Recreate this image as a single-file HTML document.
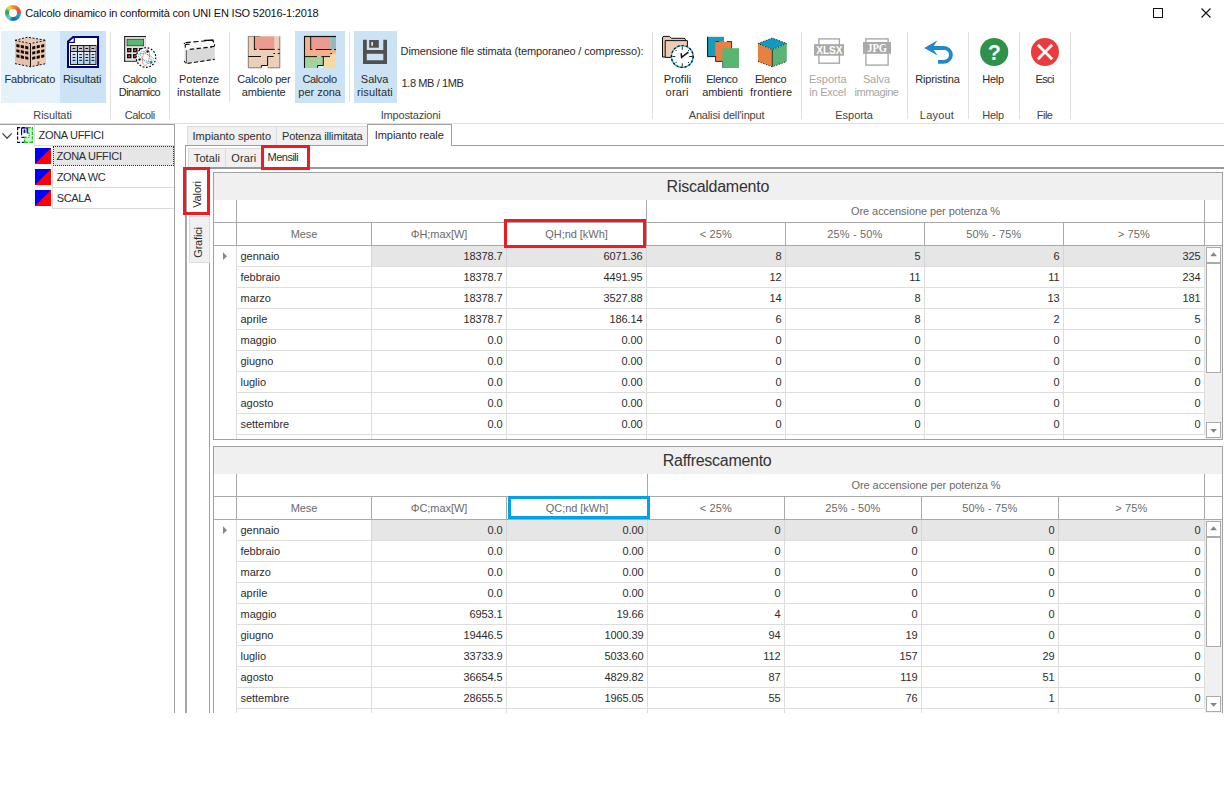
<!DOCTYPE html><html lang="it"><head><meta charset="utf-8"><title>Calcolo dinamico in conformità con UNI EN ISO 52016-1:2018</title>
<style>html,body{margin:0;padding:0;background:#fff;}body{width:1224px;height:793px;position:relative;overflow:hidden;font-family:"Liberation Sans", sans-serif;}div,svg{position:absolute;box-sizing:border-box;}.t{overflow:visible;}</style></head><body>
<div style="left:5px;top:5px;width:16.2px;height:16.2px;border-radius:50%;background:conic-gradient(from 0deg,#f6912b 0deg,#f26a33 35deg,#ee473d 70deg,#ee473d 92deg,#27a9cc 100deg,#1d8fc0 135deg,#1b67a6 175deg,#2a86b8 195deg,#63c8db 215deg,#5cc0c0 240deg,#36a456 262deg,#3aa757 290deg,#c9cf3a 308deg,#f8d230 322deg,#f7b02d 345deg,#f6912b 360deg);"></div>
<div style="left:9.2px;top:9.1px;width:7.8px;height:7.8px;border-radius:50%;background:#fff;"></div>
<div class="t" style="left:25.30px;top:5.69px;width:400px;height:15px;line-height:15px;font-size:11px;color:#111;text-align:left;letter-spacing:-0.184px;white-space:nowrap;">Calcolo dinamico in conformità con UNI EN ISO 52016-1:2018</div>
<svg style="left:1152px;top:7px" width="12" height="12"><rect x="1.5" y="1.5" width="9" height="9" fill="none" stroke="#111" stroke-width="1"/></svg>
<svg style="left:1200px;top:7px" width="12" height="12"><path d="M1.5 1.5 L10.5 10.5 M10.5 1.5 L1.5 10.5" fill="none" stroke="#111" stroke-width="1.1"/></svg>
<div style="left:1px;top:31px;width:59px;height:72px;background:#e5f1fb;"></div>
<div style="left:60px;top:31px;width:46px;height:72px;background:#cce3f6;"></div>
<div style="left:295px;top:31px;width:50px;height:72px;background:#cce3f6;"></div>
<div style="left:354px;top:31px;width:43px;height:72px;background:#cce3f6;"></div>
<div style="left:110px;top:32px;width:1px;height:87px;background:#e1e1e1;"></div>
<div style="left:169px;top:32px;width:1px;height:87px;background:#e1e1e1;"></div>
<div style="left:652px;top:32px;width:1px;height:87px;background:#e1e1e1;"></div>
<div style="left:801px;top:32px;width:1px;height:87px;background:#e1e1e1;"></div>
<div style="left:907px;top:32px;width:1px;height:87px;background:#e1e1e1;"></div>
<div style="left:968px;top:32px;width:1px;height:87px;background:#e1e1e1;"></div>
<div style="left:1019px;top:32px;width:1px;height:87px;background:#e1e1e1;"></div>
<div style="left:1070px;top:32px;width:1px;height:87px;background:#e1e1e1;"></div>
<div style="left:229px;top:32px;width:1px;height:70px;background:#e1e1e1;"></div>
<div style="left:349px;top:32px;width:1px;height:70px;background:#e1e1e1;"></div>
<div style="left:0px;top:123px;width:1224px;height:1px;background:#e0e0e0;"></div>
<div class="t" style="left:-120.24px;top:71.69px;width:300px;height:15px;line-height:15px;font-size:11px;color:#2a2a2a;text-align:center;letter-spacing:-0.119px;white-space:nowrap;">Fabbricato</div>
<div class="t" style="left:-67.82px;top:71.69px;width:300px;height:15px;line-height:15px;font-size:11px;color:#2a2a2a;text-align:center;letter-spacing:-0.065px;white-space:nowrap;">Risultati</div>
<div class="t" style="left:-10.64px;top:71.69px;width:300px;height:15px;line-height:15px;font-size:11px;color:#2a2a2a;text-align:center;letter-spacing:-0.414px;white-space:nowrap;">Calcolo</div>
<div class="t" style="left:-10.52px;top:84.69px;width:300px;height:15px;line-height:15px;font-size:11px;color:#2a2a2a;text-align:center;letter-spacing:-0.564px;white-space:nowrap;">Dinamico</div>
<div class="t" style="left:49.14px;top:71.69px;width:300px;height:15px;line-height:15px;font-size:11px;color:#2a2a2a;text-align:center;letter-spacing:-0.036px;white-space:nowrap;">Potenze</div>
<div class="t" style="left:48.97px;top:84.69px;width:300px;height:15px;line-height:15px;font-size:11px;color:#2a2a2a;text-align:center;letter-spacing:0.054px;white-space:nowrap;">installate</div>
<div class="t" style="left:113.86px;top:71.69px;width:300px;height:15px;line-height:15px;font-size:11px;color:#2a2a2a;text-align:center;letter-spacing:-0.224px;white-space:nowrap;">Calcolo per</div>
<div class="t" style="left:113.60px;top:84.69px;width:300px;height:15px;line-height:15px;font-size:11px;color:#2a2a2a;text-align:center;letter-spacing:-0.193px;white-space:nowrap;">ambiente</div>
<div class="t" style="left:169.54px;top:71.69px;width:300px;height:15px;line-height:15px;font-size:11px;color:#2a2a2a;text-align:center;letter-spacing:-0.339px;white-space:nowrap;">Calcolo</div>
<div class="t" style="left:169.64px;top:84.69px;width:300px;height:15px;line-height:15px;font-size:11px;color:#2a2a2a;text-align:center;letter-spacing:-0.022px;white-space:nowrap;">per zona</div>
<div class="t" style="left:224.61px;top:71.69px;width:300px;height:15px;line-height:15px;font-size:11px;color:#2a2a2a;text-align:center;letter-spacing:0.034px;white-space:nowrap;">Salva</div>
<div class="t" style="left:224.93px;top:84.69px;width:300px;height:15px;line-height:15px;font-size:11px;color:#2a2a2a;text-align:center;letter-spacing:0.132px;white-space:nowrap;">risultati</div>
<div class="t" style="left:527.51px;top:71.69px;width:300px;height:15px;line-height:15px;font-size:11px;color:#2a2a2a;text-align:center;letter-spacing:-0.018px;white-space:nowrap;">Profili</div>
<div class="t" style="left:527.14px;top:84.69px;width:300px;height:15px;line-height:15px;font-size:11px;color:#2a2a2a;text-align:center;letter-spacing:0.224px;white-space:nowrap;">orari</div>
<div class="t" style="left:571.82px;top:71.69px;width:300px;height:15px;line-height:15px;font-size:11px;color:#2a2a2a;text-align:center;letter-spacing:-0.397px;white-space:nowrap;">Elenco</div>
<div class="t" style="left:572.55px;top:84.69px;width:300px;height:15px;line-height:15px;font-size:11px;color:#2a2a2a;text-align:center;letter-spacing:-0.097px;white-space:nowrap;">ambienti</div>
<div class="t" style="left:620.57px;top:71.69px;width:300px;height:15px;line-height:15px;font-size:11px;color:#2a2a2a;text-align:center;letter-spacing:-0.397px;white-space:nowrap;">Elenco</div>
<div class="t" style="left:621.26px;top:84.69px;width:300px;height:15px;line-height:15px;font-size:11px;color:#2a2a2a;text-align:center;letter-spacing:0.225px;white-space:nowrap;">frontiere</div>
<div class="t" style="left:677.90px;top:71.69px;width:300px;height:15px;line-height:15px;font-size:11px;color:#a6a6a6;text-align:center;letter-spacing:-0.043px;white-space:nowrap;">Esporta</div>
<div class="t" style="left:677.62px;top:84.69px;width:300px;height:15px;line-height:15px;font-size:11px;color:#a6a6a6;text-align:center;letter-spacing:-0.231px;white-space:nowrap;">in Excel</div>
<div class="t" style="left:726.42px;top:71.69px;width:300px;height:15px;line-height:15px;font-size:11px;color:#a6a6a6;text-align:center;letter-spacing:-0.091px;white-space:nowrap;">Salva</div>
<div class="t" style="left:726.48px;top:84.69px;width:300px;height:15px;line-height:15px;font-size:11px;color:#a6a6a6;text-align:center;letter-spacing:-0.469px;white-space:nowrap;">immagine</div>
<div class="t" style="left:787.42px;top:71.69px;width:300px;height:15px;line-height:15px;font-size:11px;color:#2a2a2a;text-align:center;letter-spacing:-0.138px;white-space:nowrap;">Ripristina</div>
<div class="t" style="left:843.05px;top:71.69px;width:300px;height:15px;line-height:15px;font-size:11px;color:#2a2a2a;text-align:center;letter-spacing:-0.307px;white-space:nowrap;">Help</div>
<div class="t" style="left:894.61px;top:71.69px;width:300px;height:15px;line-height:15px;font-size:11px;color:#2a2a2a;text-align:center;letter-spacing:-0.627px;white-space:nowrap;">Esci</div>
<div class="t" style="left:-97.46px;top:107.69px;width:300px;height:15px;line-height:15px;font-size:11px;color:#444;text-align:center;letter-spacing:-0.078px;white-space:nowrap;">Risultati</div>
<div class="t" style="left:-10.33px;top:107.69px;width:300px;height:15px;line-height:15px;font-size:11px;color:#444;text-align:center;letter-spacing:-0.435px;white-space:nowrap;">Calcoli</div>
<div class="t" style="left:260.58px;top:107.69px;width:300px;height:15px;line-height:15px;font-size:11px;color:#444;text-align:center;letter-spacing:-0.168px;white-space:nowrap;">Impostazioni</div>
<div class="t" style="left:576.58px;top:107.69px;width:300px;height:15px;line-height:15px;font-size:11px;color:#444;text-align:center;letter-spacing:-0.155px;white-space:nowrap;">Analisi dell&#x27;input</div>
<div class="t" style="left:704.15px;top:107.69px;width:300px;height:15px;line-height:15px;font-size:11px;color:#444;text-align:center;letter-spacing:-0.043px;white-space:nowrap;">Esporta</div>
<div class="t" style="left:786.99px;top:107.69px;width:300px;height:15px;line-height:15px;font-size:11px;color:#444;text-align:center;letter-spacing:0.215px;white-space:nowrap;">Layout</div>
<div class="t" style="left:843.05px;top:107.69px;width:300px;height:15px;line-height:15px;font-size:11px;color:#444;text-align:center;letter-spacing:-0.307px;white-space:nowrap;">Help</div>
<div class="t" style="left:894.60px;top:107.69px;width:300px;height:15px;line-height:15px;font-size:11px;color:#444;text-align:center;letter-spacing:-0.508px;white-space:nowrap;">File</div>
<div class="t" style="left:400.60px;top:43.69px;width:400px;height:15px;line-height:15px;font-size:11px;color:#2a2a2a;text-align:left;letter-spacing:-0.123px;white-space:nowrap;">Dimensione file stimata (temporaneo / compresso):</div>
<div class="t" style="left:401.50px;top:75.69px;width:400px;height:15px;line-height:15px;font-size:11px;color:#2a2a2a;text-align:left;letter-spacing:-0.385px;white-space:nowrap;">1.8 MB / 1MB</div>
<svg style="left:0;top:0" width="1224" height="125" viewBox="0 0 1224 125" shape-rendering="auto">
<g>
<path d="M15 40.3 L27.5 37.2 L46 40.3 L30.5 43.6 Z" fill="#ecc9b2"/>
<path d="M15 40.3 L30.5 43.6 L30.5 66.8 L15 63.6 Z" fill="#e6c0a8"/>
<path d="M30.5 43.6 L46 40.3 L46 63.6 L30.5 66.8 Z" fill="#eccbb5"/>
<path d="M15 40.3 L27.5 37.2 L46 40.3 M15 63.6 L30.5 66.8 L46 63.6 M15 40.3 L30.5 43.6 L46 40.3" fill="none" stroke="#111" stroke-width="1" stroke-dasharray="2 1.6"/>
<path d="M30.5 43.6 V66.8" stroke="#111" stroke-width="1"/>
<path d="M16.4 44.0 l3.1 0.7 v2.9 l-3.1 -0.7 Z" fill="#0a0a0a"/>
<path d="M32.2 46.5 l3.1 -0.7 v2.9 l-3.1 0.7 Z" fill="#0a0a0a"/>
<path d="M20.8 44.9 l3.1 0.7 v2.9 l-3.1 -0.7 Z" fill="#0a0a0a"/>
<path d="M36.7 45.6 l3.1 -0.7 v2.9 l-3.1 0.7 Z" fill="#0a0a0a"/>
<path d="M25.2 45.8 l3.1 0.7 v2.9 l-3.1 -0.7 Z" fill="#0a0a0a"/>
<path d="M41.2 44.7 l3.1 -0.7 v2.9 l-3.1 0.7 Z" fill="#0a0a0a"/>
<path d="M16.4 49.2 l3.1 0.7 v2.9 l-3.1 -0.7 Z" fill="#0a0a0a"/>
<path d="M32.2 51.7 l3.1 -0.7 v2.9 l-3.1 0.7 Z" fill="#0a0a0a"/>
<path d="M20.8 50.1 l3.1 0.7 v2.9 l-3.1 -0.7 Z" fill="#0a0a0a"/>
<path d="M36.7 50.8 l3.1 -0.7 v2.9 l-3.1 0.7 Z" fill="#0a0a0a"/>
<path d="M25.2 51.0 l3.1 0.7 v2.9 l-3.1 -0.7 Z" fill="#0a0a0a"/>
<path d="M41.2 49.9 l3.1 -0.7 v2.9 l-3.1 0.7 Z" fill="#0a0a0a"/>
<path d="M16.4 54.4 l3.1 0.7 v2.9 l-3.1 -0.7 Z" fill="#0a0a0a"/>
<path d="M32.2 56.9 l3.1 -0.7 v2.9 l-3.1 0.7 Z" fill="#0a0a0a"/>
<path d="M20.8 55.3 l3.1 0.7 v2.9 l-3.1 -0.7 Z" fill="#0a0a0a"/>
<path d="M36.7 56.0 l3.1 -0.7 v2.9 l-3.1 0.7 Z" fill="#0a0a0a"/>
<path d="M25.2 56.2 l3.1 0.7 v2.9 l-3.1 -0.7 Z" fill="#0a0a0a"/>
<path d="M41.2 55.1 l3.1 -0.7 v2.9 l-3.1 0.7 Z" fill="#0a0a0a"/>
<path d="M37.6 61.6 l1.6 -0.3 v3.8 l-1.6 0.3 Z" fill="#7a5a48"/>
</g>
<g>
<path d="M68 41.5 L73.2 37 H98 V67 H68 Z" fill="#fff" stroke="#000080" stroke-width="2"/>
<path d="M68.6 42.3 H74.3 V36.6" fill="none" stroke="#000080" stroke-width="1.2"/>
<defs><linearGradient id="gtb" x1="0" y1="0" x2="0" y2="1"><stop offset="0" stop-color="#ffffff"/><stop offset="1" stop-color="#a9cff3"/></linearGradient></defs>
<rect x="70.5" y="45.5" width="25.5" height="19" fill="url(#gtb)" stroke="#1a1a1a" stroke-width="1"/>
<rect x="71" y="46" width="24.5" height="5" fill="#c3c3c3"/>
<path d="M70.5 51.5 H96 M77.5 45.5 V64.5 M83.8 45.5 V64.5 M89.8 45.5 V64.5" stroke="#1a1a1a" stroke-width="1" fill="none"/>
<path d="M72.6 48.5 h2.8 M72.6 54.6 h2.8 M72.6 57.5 h2.8 M72.6 60.4 h2.8" stroke="#111" stroke-width="1"/>
<path d="M79.19999999999999 48.5 h2.8 M79.19999999999999 54.6 h2.8 M79.19999999999999 57.5 h2.8 M79.19999999999999 60.4 h2.8" stroke="#111" stroke-width="1"/>
<path d="M85.39999999999999 48.5 h2.8 M85.39999999999999 54.6 h2.8 M85.39999999999999 57.5 h2.8 M85.39999999999999 60.4 h2.8" stroke="#111" stroke-width="1"/>
<path d="M91.5 48.5 h2.8 M91.5 54.6 h2.8 M91.5 57.5 h2.8 M91.5 60.4 h2.8" stroke="#111" stroke-width="1"/>
</g>
<g>
<rect x="124" y="36" width="22" height="25.8" fill="#c4c4c4"/>
<path d="M124.7 36.5 H146 M124.7 36 V61.8 M124 61.2 H146" stroke="#1a1a1a" stroke-width="1" fill="none"/>
<rect x="125.6" y="37.4" width="20" height="23.2" fill="#e4e4e4"/>
<rect x="127" y="39.2" width="16.7" height="6.6" fill="#5cb870" stroke="#1a1a1a" stroke-width="0.6"/>
<rect x="127" y="48" width="4.5" height="4.3" fill="#111"/><rect x="128.4" y="49.3" width="1.7" height="1.7" fill="#f0454a"/>
<rect x="127" y="54" width="4.5" height="4.3" fill="#111"/><rect x="128.4" y="55.3" width="1.7" height="1.7" fill="#f0454a"/>
<rect x="133" y="48" width="4.5" height="4.3" fill="#111"/><rect x="134.4" y="49.3" width="1.7" height="1.7" fill="#f0454a"/>
<rect x="133" y="54" width="4.5" height="4.3" fill="#111"/><rect x="134.4" y="55.3" width="1.7" height="1.7" fill="#f0454a"/>
<rect x="139" y="48" width="4.5" height="4.3" fill="#111"/><rect x="140.4" y="49.3" width="1.7" height="1.7" fill="#f0454a"/>
<rect x="139" y="54" width="4.5" height="4.3" fill="#111"/><rect x="140.4" y="55.3" width="1.7" height="1.7" fill="#f0454a"/>
<circle cx="146" cy="57.5" r="9.8" fill="#fff" stroke="#000" stroke-width="1.15" stroke-dasharray="1.7 1.7"/>
<ellipse cx="146" cy="57.5" rx="8" ry="3.3" fill="none" stroke="#39b36a" stroke-width="0.8" stroke-dasharray="1.4 0.9" transform="rotate(18 146 57.5)"/>
<ellipse cx="146" cy="57.5" rx="8" ry="3.3" fill="none" stroke="#22a7d0" stroke-width="0.8" stroke-dasharray="1.4 0.9" transform="rotate(48 146 57.5)"/>
<ellipse cx="146" cy="57.5" rx="8" ry="3.3" fill="none" stroke="#ee3b43" stroke-width="0.8" stroke-dasharray="1.4 0.9" transform="rotate(100 146 57.5)"/>
<circle cx="147.6" cy="51.5" r="1.2" fill="#111"/><circle cx="139.6" cy="59.6" r="1.2" fill="#111"/><circle cx="151" cy="62.4" r="1.3" fill="#1586a8"/>
</g>
<g>
<path d="M184.2 43.6 L213.6 40.2 L214.8 46.8 L186.5 50 Z" fill="#fff"/>
<path d="M184.2 43.6 L186.5 50 V63.4 L184.2 61.4 Z" fill="#ececec"/>
<path d="M186.5 50.1 L214.8 46.9 V59.4 L186.5 63.5 Z" fill="#d9d9d9"/>
<path d="M186 44.2 L198.5 48.4 M194 43.2 L207.5 47.5 M203 42.2 L213.8 46" stroke="#e2e2e2" stroke-width="0.8" fill="none"/>
<path d="M185.6 42.6 L213.4 40.1" fill="none" stroke="#0a0a0a" stroke-width="1.1" stroke-dasharray="5.2 2.6"/>
<path d="M204 40.4 L212.6 40.2 L213.8 42.4" fill="none" stroke="#0a0a0a" stroke-width="1.4"/>
<path d="M189.8 49.4 L212 46.9" fill="none" stroke="#0a0a0a" stroke-width="1.1" stroke-dasharray="4.4 2.4"/>
<path d="M185.4 47.6 Q184.8 44.6 186.2 44.4 L189.6 44.2 M214.5 44.2 V45.6 Q214.4 46.6 213 46.6 L210.8 46.7" fill="none" stroke="#0a0a0a" stroke-width="1.1"/>
<path d="M187.6 63.4 L214.8 59.3" fill="none" stroke="#0a0a0a" stroke-width="1.1" stroke-dasharray="4.2 2.2"/>
<path d="M186.4 50.2 V63" fill="none" stroke="#333" stroke-width="0.8"/>
<circle cx="184.4" cy="43.5" r="0.7" fill="#111"/><circle cx="184.5" cy="61.5" r="0.7" fill="#111"/><path d="M184.8 62 L186 63.6" stroke="#111" stroke-width="1"/>
</g>
<g>
<path d="M248.3 36.3 H279.8 V67.8 H267.6 V65.4 H261.4 V67.8 H248.3 Z" fill="#ebcfb9"/>
<rect x="254.8" y="36.5" width="19.4" height="12.6" fill="#ec9b90"/>
<path d="M248.3 36.3 V67.8 H261.4 M267.6 67.8 H279.8 V36.3" fill="none" stroke="#5a5048" stroke-width="0.7"/>
<path d="M248.3 36.4 H260" stroke="#777" stroke-width="0.8"/>
<path d="M254.4 36.3 V49.8 M254 49.4 H256.6 M259.2 49.4 H274.8 M277.8 49.4 H279.8 M277.8 53.5 H279.8 M273.4 53.5 H275 M248.3 56.5 H261 M267.4 56.5 H273.6 M267.6 56.5 V65.6 M261.4 67.6 V65.5 H267.6" fill="none" stroke="#111" stroke-width="1"/>
</g>
<g>
<rect x="304.3" y="36.3" width="6.4" height="20.3" fill="#f4b08b"/>
<rect x="304.3" y="49.4" width="31.7" height="7.2" fill="#f4b08b"/>
<rect x="310.8" y="36.5" width="19.6" height="12.8" fill="#ec9b90"/>
<rect x="330.4" y="36.5" width="5.6" height="12.8" fill="#8fbcb8"/>
<path d="M304.3 56.7 H323.2 V68 H317.6 V65.5 H323.2 V68 H304.3 Z" fill="#a3d29c"/>
<rect x="304.3" y="56.7" width="19" height="11.3" fill="#a3d29c"/>
<path d="M323.4 56.7 H330.5 V53.7 H336 V68 H323.4 Z" fill="#f5d9a2"/>
<rect x="317.8" y="65.6" width="5.3" height="2.5" fill="#e9f2fb"/>
<path d="M304 36.5 H336" stroke="#111" stroke-width="1.2"/>
<path d="M304.5 36.3 V68" stroke="#111" stroke-width="1.1"/>
<path d="M310.7 36.3 V49.8 M310.4 49.5 H312.4 M315.6 49.5 H331.6 M334 49.5 H336 M330.4 53.6 H332 M304.3 56.6 H317 M321.4 56.6 H330 M323.3 56.6 V65.6 M317.6 67.8 V65.5 H323.3" fill="none" stroke="#111" stroke-width="1"/>
</g>
<g fill="#505050">
<path d="M363 39.8 H366.8 V60.2 H383.3 V39.8 H387 V64 H363 Z"/>
<rect x="366" y="50" width="18" height="3.8"/>
<rect x="369.2" y="40" width="9.6" height="7.7"/>
<rect x="371.3" y="42" width="1.7" height="3.8" fill="#d6e8f7"/>
</g>
<g>
<path d="M662.5 38 Q662.5 36.4 664 36.4 H669.6 L671.4 38.3 H684 Q685.4 38.3 685.4 39.8 V57 H662.5 Z" fill="#e9c5ad" stroke="#111" stroke-width="1"/>
<path d="M665.2 40.6 H687.4 V57.4 H665.2 Z" fill="#edccb6" stroke="#111" stroke-width="1"/>
<circle cx="682.3" cy="56.5" r="10.9" fill="#fff" stroke="#26b4d8" stroke-width="1.3"/>
<circle cx="682.3" cy="56.5" r="10.9" fill="none" stroke="#111" stroke-width="1.3" stroke-dasharray="2 2.2"/>
<path d="M682.3 46.8 v3 M682.3 63.4 v3 M672.4 56.5 h3 M689.2 56.5 h3 M675.6 50 l1 1 M689 50 l-1 1 M675.6 63 l1 -1 M689 63 l-1 -1" stroke="#111" stroke-width="0.9" fill="none"/>
<path d="M681.2 53.2 L681.6 57.4 L688.4 52.2" fill="none" stroke="#111" stroke-width="1.5"/>
<path d="M692.6 54 l1.2 2.5 l-1.2 2.5 Z" fill="#111"/>
</g>
<g>
<rect x="707.3" y="36.8" width="16.7" height="20" fill="#189cb9"/>
<path d="M707.6 36.8 V56.6 H716" fill="none" stroke="#111" stroke-width="1"/>
<rect x="715.3" y="41.7" width="16.2" height="20" fill="#ee7d46"/>
<path d="M715.3 41.5 H719 M727 41.5 H731.6 V49 M715.6 56 V61.4 H723" fill="none" stroke="#222" stroke-width="0.9"/>
<rect x="722.4" y="48.2" width="16.6" height="19.8" fill="#5ab573"/>
<path d="M722.7 62 V68" stroke="#446" stroke-width="0.7"/>
</g>
<g>
<path d="M758 43.5 L772.3 38 L786.8 43.5 L772.3 49.6 Z" fill="#0f9bc1"/>
<path d="M758 43.5 L772.3 49.6 V66.8 L758 61.4 Z" fill="#e8803f"/>
<path d="M772.3 49.6 L786.8 43.5 V61.4 L772.3 66.8 Z" fill="#5ab573"/>
<path d="M758 43.5 L772.3 38 L786.8 43.5 L772.3 49.6 Z M758 61.4 L772.3 66.8 L786.8 61.4" fill="none" stroke="#111" stroke-width="0.9" stroke-dasharray="1.2 1.6"/>
<path d="M772.3 49.6 V66.8" stroke="#222" stroke-width="0.9"/>
</g>
<rect x="818.9" y="38.9" width="20.5" height="24.3" fill="#fff" stroke="#a9a9a9" stroke-width="1.4"/>
<rect x="814" y="44.2" width="30" height="11.5" fill="#a9a9a9"/>
<text x="829.3" y="53.8" font-family="Liberation Sans, sans-serif" font-weight="bold" font-size="10.8" fill="#fff" text-anchor="middle" textLength="26.2" lengthAdjust="spacingAndGlyphs">XLSX</text>
<rect x="865.9" y="38.9" width="22.2" height="26.2" fill="#fff" stroke="#a9a9a9" stroke-width="1.4"/>
<rect x="863" y="42" width="28" height="11.8" fill="#a9a9a9"/>
<text x="877.1" y="52.1" font-family="Liberation Serif, serif" font-weight="bold" font-size="12.4" fill="#fff" text-anchor="middle" textLength="19.8" lengthAdjust="spacingAndGlyphs">JPG</text>
<path d="M924.2 48 L937.6 40.2 L933.6 46.1 H944 A8.8 8.8 0 0 1 944 63.7 H938 V59.9 H944 A5 5 0 0 0 944 49.9 H933.6 L937.6 55.5 Z" fill="#1f88d0"/>
<circle cx="994.2" cy="52" r="14.1" fill="#2f9249"/>
<text x="994.3" y="59.6" font-family="Liberation Sans, sans-serif" font-weight="bold" font-size="21.5" fill="#fff" text-anchor="middle">?</text>
<circle cx="1045" cy="52" r="14" fill="#ea3b3d"/>
<path d="M1037.8 44.8 L1052.2 59.2 M1052.2 44.8 L1037.8 59.2" stroke="#fff" stroke-width="2.7" fill="none"/>
</svg>
<div style="left:0px;top:124px;width:175px;height:1px;background:#a0a0a0;"></div>
<div style="left:174px;top:124px;width:1px;height:589px;background:#a0a0a0;"></div>
<div style="left:34px;top:125px;width:1px;height:21px;background:#dadada;"></div>
<div style="left:34px;top:145px;width:140px;height:1px;background:#dadada;"></div>
<div style="left:52px;top:166px;width:1px;height:43px;background:#dadada;"></div>
<div style="left:52px;top:187px;width:122px;height:1px;background:#dadada;"></div>
<div style="left:52px;top:208px;width:122px;height:1px;background:#dadada;"></div>
<div style="left:53px;top:146px;width:121px;height:20px;background:#e6e6e6;border:1px dotted #333;"></div>
<svg style="left:2px;top:132px" width="11" height="8"><path d="M0.5 1.4 L5.1 6.2 L9.7 1.4" fill="none" stroke="#444" stroke-width="1.3"/></svg>
<div class="t" style="left:38.50px;top:127.69px;width:400px;height:15px;line-height:15px;font-size:11px;color:#2c2c2c;text-align:left;letter-spacing:-0.294px;white-space:nowrap;">ZONA UFFICI</div>
<div class="t" style="left:56.50px;top:148.69px;width:400px;height:15px;line-height:15px;font-size:11px;color:#2c2c2c;text-align:left;letter-spacing:-0.294px;white-space:nowrap;">ZONA UFFICI</div>
<div class="t" style="left:56.70px;top:169.69px;width:400px;height:15px;line-height:15px;font-size:11px;color:#2c2c2c;text-align:left;letter-spacing:-0.38px;white-space:nowrap;">ZONA WC</div>
<div class="t" style="left:56.70px;top:190.69px;width:400px;height:15px;line-height:15px;font-size:11px;color:#2c2c2c;text-align:left;letter-spacing:-0.38px;white-space:nowrap;">SCALA</div>
<svg style="left:35px;top:148px" width="16" height="16"><rect width="16" height="16" fill="#0000ff"/><path d="M16 0 L16 16 L0 16 Z" fill="#ff0000"/></svg>
<svg style="left:35px;top:169px" width="16" height="16"><rect width="16" height="16" fill="#0000ff"/><path d="M16 0 L16 16 L0 16 Z" fill="#ff0000"/></svg>
<svg style="left:35px;top:190px" width="16" height="16"><rect width="16" height="16" fill="#0000ff"/><path d="M16 0 L16 16 L0 16 Z" fill="#ff0000"/></svg>
<svg style="left:17px;top:127px" width="16" height="16" viewBox="0 0 16 16">
<path d="M11 1 H15.5 V15.5 H8 V10.3 H12 V6.3 H11 Z" fill="#c9f7c9"/>
<path d="M0.6 0 V16 M0 0.6 H10 M0 15.4 H7.5" fill="none" stroke="#000080" stroke-width="1.2" stroke-dasharray="3.2 1.6"/>
<path d="M10.8 0 V6.3 H12.2 V9 M15.4 0 V16 M10.5 0.6 H16 M7.6 15.4 H16 M7.6 16 V10.3 H12.4" fill="none" stroke="#14c814" stroke-width="1.3" stroke-dasharray="3.4 1.2"/>
<path d="M4.6 0.8 V8.2 M4.2 1 H10.2 M10.2 0.8 V6 M4.4 10.4 H7.4" fill="none" stroke="#000080" stroke-width="1.2"/>
<path d="M6.6 2.6 V6.2 M8.5 2.6 V6.2" fill="none" stroke="#5a7fd8" stroke-width="0.8"/>
<path d="M7.5 2.4 V6" fill="none" stroke="#000080" stroke-width="0.9"/>
</svg>
<div style="left:187px;top:126px;width:90px;height:20px;background:#f0f0f0;border:1px solid #dcdcdc;"></div>
<div style="left:276px;top:126px;width:92px;height:20px;background:#f0f0f0;border:1px solid #dcdcdc;"></div>
<div style="left:367px;top:124px;width:85px;height:22px;background:#fff;border:1px solid #a0a0a0;border-bottom:none;"></div>
<div class="t" style="left:192.50px;top:128.69px;width:400px;height:15px;line-height:15px;font-size:11px;color:#2c2c2c;text-align:left;letter-spacing:0.016px;white-space:nowrap;">Impianto spento</div>
<div class="t" style="left:282.00px;top:128.69px;width:400px;height:15px;line-height:15px;font-size:11px;color:#2c2c2c;text-align:left;letter-spacing:-0.15px;white-space:nowrap;">Potenza illimitata</div>
<div class="t" style="left:374.70px;top:127.69px;width:400px;height:15px;line-height:15px;font-size:11px;color:#2c2c2c;text-align:left;letter-spacing:-0.039px;white-space:nowrap;">Impianto reale</div>
<div style="left:185px;top:145px;width:183px;height:1px;background:#a0a0a0;"></div>
<div style="left:451px;top:145px;width:773px;height:1px;background:#a0a0a0;"></div>
<div style="left:185px;top:145px;width:1px;height:22px;background:#a0a0a0;"></div>
<div style="left:185px;top:167px;width:2px;height:546px;background:#a6a6a6;"></div>
<div style="left:188px;top:148px;width:38px;height:20px;background:#f0f0f0;border:1px solid #dcdcdc;"></div>
<div style="left:225px;top:148px;width:37px;height:20px;background:#f0f0f0;border:1px solid #dcdcdc;"></div>
<div class="t" style="left:193.80px;top:150.69px;width:400px;height:15px;line-height:15px;font-size:11px;color:#2c2c2c;text-align:left;letter-spacing:0.104px;white-space:nowrap;">Totali</div>
<div class="t" style="left:231.20px;top:150.69px;width:400px;height:15px;line-height:15px;font-size:11px;color:#2c2c2c;text-align:left;letter-spacing:0.164px;white-space:nowrap;">Orari</div>
<div style="left:187px;top:167px;width:1037px;height:2px;background:#999;"></div>
<div style="left:261px;top:145px;width:49px;height:25px;background:#fff;border:3px solid #ed1c24;"></div>
<div class="t" style="left:267.50px;top:149.69px;width:400px;height:15px;line-height:15px;font-size:11px;color:#2c2c2c;text-align:left;letter-spacing:-0.505px;white-space:nowrap;">Mensili</div>
<div style="left:209px;top:168px;width:1px;height:545px;background:#a0a0a0;"></div>
<div style="left:189px;top:216px;width:21px;height:47px;background:#f0f0f0;border:1px solid #dcdcdc;"></div>
<div style="left:183px;top:167px;width:27px;height:48px;border:3px solid #ed1c24;"></div>
<div class="t" style="left:167.2px;top:187.0px;width:60px;height:15px;line-height:15px;font-size:11px;color:#2c2c2c;text-align:center;letter-spacing:-0.1px;transform:rotate(-90deg);white-space:nowrap;">Valori</div>
<div class="t" style="left:167.8px;top:234.5px;width:60px;height:15px;line-height:15px;font-size:11px;color:#2c2c2c;text-align:center;letter-spacing:-0.2px;transform:rotate(-90deg);white-space:nowrap;">Grafici</div>
<div style="left:213px;top:172px;width:1010px;height:268px;background:#fff;border:1px solid #a0a0a0;"></div>
<div style="left:214px;top:173px;width:1008px;height:27px;background:#f0f0f0;"></div>
<div class="t" style="left:666.60px;top:177.06px;width:400px;height:20px;line-height:20px;font-size:16px;color:#333;text-align:left;letter-spacing:-0.261px;white-space:nowrap;">Riscaldamento</div>
<div style="left:214px;top:222px;width:1008px;height:1px;background:#a8a8a8;"></div>
<div style="left:214px;top:245px;width:1008px;height:1px;background:#a8a8a8;"></div>
<div style="left:236px;top:200px;width:1px;height:45px;background:#a8a8a8;"></div>
<div style="left:236px;top:246px;width:1px;height:193px;background:#dedede;"></div>
<div style="left:646px;top:200px;width:1px;height:22px;background:#a8a8a8;"></div>
<div style="left:1204px;top:200px;width:1px;height:45px;background:#a8a8a8;"></div>
<div style="left:371px;top:222px;width:1px;height:23px;background:#a8a8a8;"></div>
<div style="left:506px;top:222px;width:1px;height:23px;background:#a8a8a8;"></div>
<div style="left:646px;top:222px;width:1px;height:23px;background:#a8a8a8;"></div>
<div style="left:785px;top:222px;width:1px;height:23px;background:#a8a8a8;"></div>
<div style="left:924px;top:222px;width:1px;height:23px;background:#a8a8a8;"></div>
<div style="left:1063px;top:222px;width:1px;height:23px;background:#a8a8a8;"></div>
<div class="t" style="left:775.53px;top:204.19px;width:300px;height:15px;line-height:15px;font-size:11px;color:#6a6a6a;text-align:center;letter-spacing:-0.07px;white-space:nowrap;">Ore accensione per potenza %</div>
<div class="t" style="left:204.03px;top:226.69px;width:200px;height:15px;line-height:15px;font-size:11px;color:#6a6a6a;text-align:center;letter-spacing:-0.05px;white-space:nowrap;">Mese</div>
<div class="t" style="left:339.02px;top:226.69px;width:200px;height:15px;line-height:15px;font-size:11px;color:#6a6a6a;text-align:center;letter-spacing:-0.05px;white-space:nowrap;">ΦH;max[W]</div>
<div class="t" style="left:476.52px;top:226.69px;width:200px;height:15px;line-height:15px;font-size:11px;color:#6a6a6a;text-align:center;letter-spacing:-0.05px;white-space:nowrap;">QH;nd [kWh]</div>
<div class="t" style="left:615.92px;top:226.69px;width:200px;height:15px;line-height:15px;font-size:11px;color:#6a6a6a;text-align:center;letter-spacing:0.15px;white-space:nowrap;">&lt; 25%</div>
<div class="t" style="left:754.92px;top:226.69px;width:200px;height:15px;line-height:15px;font-size:11px;color:#6a6a6a;text-align:center;letter-spacing:0.15px;white-space:nowrap;">25% - 50%</div>
<div class="t" style="left:893.92px;top:226.69px;width:200px;height:15px;line-height:15px;font-size:11px;color:#6a6a6a;text-align:center;letter-spacing:0.15px;white-space:nowrap;">50% - 75%</div>
<div class="t" style="left:1033.92px;top:226.69px;width:200px;height:15px;line-height:15px;font-size:11px;color:#6a6a6a;text-align:center;letter-spacing:0.15px;white-space:nowrap;">&gt; 75%</div>
<div style="left:372px;top:246px;width:832px;height:21px;background:#e6e6e6;"></div>
<svg style="left:223px;top:252px" width="5" height="9"><path d="M0 0.3 L4 4.2 L0 8.1 Z" fill="#858585"/></svg>
<div style="left:237px;top:266px;width:968px;height:1px;background:#dedede;"></div>
<div style="left:371px;top:246px;width:1px;height:21px;background:#d6d6d6;"></div>
<div style="left:506px;top:246px;width:1px;height:21px;background:#d6d6d6;"></div>
<div style="left:646px;top:246px;width:1px;height:21px;background:#d6d6d6;"></div>
<div style="left:785px;top:246px;width:1px;height:21px;background:#d6d6d6;"></div>
<div style="left:924px;top:246px;width:1px;height:21px;background:#d6d6d6;"></div>
<div style="left:1063px;top:246px;width:1px;height:21px;background:#d6d6d6;"></div>
<div style="left:1204px;top:246px;width:1px;height:21px;background:#d6d6d6;"></div>
<div class="t" style="left:240.50px;top:248.69px;width:400px;height:15px;line-height:15px;font-size:11px;color:#2c2c2c;text-align:left;letter-spacing:-0.03px;white-space:nowrap;">gennaio</div>
<div class="t" style="left:382.60px;top:248.69px;width:120px;height:15px;line-height:15px;font-size:11px;color:#2c2c2c;text-align:right;letter-spacing:-0.1px;white-space:nowrap;">18378.7</div>
<div class="t" style="left:522.60px;top:248.69px;width:120px;height:15px;line-height:15px;font-size:11px;color:#2c2c2c;text-align:right;letter-spacing:-0.1px;white-space:nowrap;">6071.36</div>
<div class="t" style="left:661.60px;top:248.69px;width:120px;height:15px;line-height:15px;font-size:11px;color:#2c2c2c;text-align:right;letter-spacing:-0.1px;white-space:nowrap;">8</div>
<div class="t" style="left:800.60px;top:248.69px;width:120px;height:15px;line-height:15px;font-size:11px;color:#2c2c2c;text-align:right;letter-spacing:-0.1px;white-space:nowrap;">5</div>
<div class="t" style="left:939.60px;top:248.69px;width:120px;height:15px;line-height:15px;font-size:11px;color:#2c2c2c;text-align:right;letter-spacing:-0.1px;white-space:nowrap;">6</div>
<div class="t" style="left:1080.60px;top:248.69px;width:120px;height:15px;line-height:15px;font-size:11px;color:#2c2c2c;text-align:right;letter-spacing:-0.1px;white-space:nowrap;">325</div>
<div style="left:237px;top:287px;width:968px;height:1px;background:#dedede;"></div>
<div style="left:371px;top:267px;width:1px;height:21px;background:#dedede;"></div>
<div style="left:506px;top:267px;width:1px;height:21px;background:#dedede;"></div>
<div style="left:646px;top:267px;width:1px;height:21px;background:#dedede;"></div>
<div style="left:785px;top:267px;width:1px;height:21px;background:#dedede;"></div>
<div style="left:924px;top:267px;width:1px;height:21px;background:#dedede;"></div>
<div style="left:1063px;top:267px;width:1px;height:21px;background:#dedede;"></div>
<div style="left:1204px;top:267px;width:1px;height:21px;background:#dedede;"></div>
<div class="t" style="left:240.50px;top:269.69px;width:400px;height:15px;line-height:15px;font-size:11px;color:#2c2c2c;text-align:left;letter-spacing:-0.03px;white-space:nowrap;">febbraio</div>
<div class="t" style="left:382.60px;top:269.69px;width:120px;height:15px;line-height:15px;font-size:11px;color:#2c2c2c;text-align:right;letter-spacing:-0.1px;white-space:nowrap;">18378.7</div>
<div class="t" style="left:522.60px;top:269.69px;width:120px;height:15px;line-height:15px;font-size:11px;color:#2c2c2c;text-align:right;letter-spacing:-0.1px;white-space:nowrap;">4491.95</div>
<div class="t" style="left:661.60px;top:269.69px;width:120px;height:15px;line-height:15px;font-size:11px;color:#2c2c2c;text-align:right;letter-spacing:-0.1px;white-space:nowrap;">12</div>
<div class="t" style="left:800.60px;top:269.69px;width:120px;height:15px;line-height:15px;font-size:11px;color:#2c2c2c;text-align:right;letter-spacing:-0.1px;white-space:nowrap;">11</div>
<div class="t" style="left:939.60px;top:269.69px;width:120px;height:15px;line-height:15px;font-size:11px;color:#2c2c2c;text-align:right;letter-spacing:-0.1px;white-space:nowrap;">11</div>
<div class="t" style="left:1080.60px;top:269.69px;width:120px;height:15px;line-height:15px;font-size:11px;color:#2c2c2c;text-align:right;letter-spacing:-0.1px;white-space:nowrap;">234</div>
<div style="left:237px;top:308px;width:968px;height:1px;background:#dedede;"></div>
<div style="left:371px;top:288px;width:1px;height:21px;background:#dedede;"></div>
<div style="left:506px;top:288px;width:1px;height:21px;background:#dedede;"></div>
<div style="left:646px;top:288px;width:1px;height:21px;background:#dedede;"></div>
<div style="left:785px;top:288px;width:1px;height:21px;background:#dedede;"></div>
<div style="left:924px;top:288px;width:1px;height:21px;background:#dedede;"></div>
<div style="left:1063px;top:288px;width:1px;height:21px;background:#dedede;"></div>
<div style="left:1204px;top:288px;width:1px;height:21px;background:#dedede;"></div>
<div class="t" style="left:240.50px;top:290.69px;width:400px;height:15px;line-height:15px;font-size:11px;color:#2c2c2c;text-align:left;letter-spacing:-0.03px;white-space:nowrap;">marzo</div>
<div class="t" style="left:382.60px;top:290.69px;width:120px;height:15px;line-height:15px;font-size:11px;color:#2c2c2c;text-align:right;letter-spacing:-0.1px;white-space:nowrap;">18378.7</div>
<div class="t" style="left:522.60px;top:290.69px;width:120px;height:15px;line-height:15px;font-size:11px;color:#2c2c2c;text-align:right;letter-spacing:-0.1px;white-space:nowrap;">3527.88</div>
<div class="t" style="left:661.60px;top:290.69px;width:120px;height:15px;line-height:15px;font-size:11px;color:#2c2c2c;text-align:right;letter-spacing:-0.1px;white-space:nowrap;">14</div>
<div class="t" style="left:800.60px;top:290.69px;width:120px;height:15px;line-height:15px;font-size:11px;color:#2c2c2c;text-align:right;letter-spacing:-0.1px;white-space:nowrap;">8</div>
<div class="t" style="left:939.60px;top:290.69px;width:120px;height:15px;line-height:15px;font-size:11px;color:#2c2c2c;text-align:right;letter-spacing:-0.1px;white-space:nowrap;">13</div>
<div class="t" style="left:1080.60px;top:290.69px;width:120px;height:15px;line-height:15px;font-size:11px;color:#2c2c2c;text-align:right;letter-spacing:-0.1px;white-space:nowrap;">181</div>
<div style="left:237px;top:329px;width:968px;height:1px;background:#dedede;"></div>
<div style="left:371px;top:309px;width:1px;height:21px;background:#dedede;"></div>
<div style="left:506px;top:309px;width:1px;height:21px;background:#dedede;"></div>
<div style="left:646px;top:309px;width:1px;height:21px;background:#dedede;"></div>
<div style="left:785px;top:309px;width:1px;height:21px;background:#dedede;"></div>
<div style="left:924px;top:309px;width:1px;height:21px;background:#dedede;"></div>
<div style="left:1063px;top:309px;width:1px;height:21px;background:#dedede;"></div>
<div style="left:1204px;top:309px;width:1px;height:21px;background:#dedede;"></div>
<div class="t" style="left:240.50px;top:311.69px;width:400px;height:15px;line-height:15px;font-size:11px;color:#2c2c2c;text-align:left;letter-spacing:-0.03px;white-space:nowrap;">aprile</div>
<div class="t" style="left:382.60px;top:311.69px;width:120px;height:15px;line-height:15px;font-size:11px;color:#2c2c2c;text-align:right;letter-spacing:-0.1px;white-space:nowrap;">18378.7</div>
<div class="t" style="left:522.60px;top:311.69px;width:120px;height:15px;line-height:15px;font-size:11px;color:#2c2c2c;text-align:right;letter-spacing:-0.1px;white-space:nowrap;">186.14</div>
<div class="t" style="left:661.60px;top:311.69px;width:120px;height:15px;line-height:15px;font-size:11px;color:#2c2c2c;text-align:right;letter-spacing:-0.1px;white-space:nowrap;">6</div>
<div class="t" style="left:800.60px;top:311.69px;width:120px;height:15px;line-height:15px;font-size:11px;color:#2c2c2c;text-align:right;letter-spacing:-0.1px;white-space:nowrap;">8</div>
<div class="t" style="left:939.60px;top:311.69px;width:120px;height:15px;line-height:15px;font-size:11px;color:#2c2c2c;text-align:right;letter-spacing:-0.1px;white-space:nowrap;">2</div>
<div class="t" style="left:1080.60px;top:311.69px;width:120px;height:15px;line-height:15px;font-size:11px;color:#2c2c2c;text-align:right;letter-spacing:-0.1px;white-space:nowrap;">5</div>
<div style="left:237px;top:350px;width:968px;height:1px;background:#dedede;"></div>
<div style="left:371px;top:330px;width:1px;height:21px;background:#dedede;"></div>
<div style="left:506px;top:330px;width:1px;height:21px;background:#dedede;"></div>
<div style="left:646px;top:330px;width:1px;height:21px;background:#dedede;"></div>
<div style="left:785px;top:330px;width:1px;height:21px;background:#dedede;"></div>
<div style="left:924px;top:330px;width:1px;height:21px;background:#dedede;"></div>
<div style="left:1063px;top:330px;width:1px;height:21px;background:#dedede;"></div>
<div style="left:1204px;top:330px;width:1px;height:21px;background:#dedede;"></div>
<div class="t" style="left:240.50px;top:332.69px;width:400px;height:15px;line-height:15px;font-size:11px;color:#2c2c2c;text-align:left;letter-spacing:-0.03px;white-space:nowrap;">maggio</div>
<div class="t" style="left:382.60px;top:332.69px;width:120px;height:15px;line-height:15px;font-size:11px;color:#2c2c2c;text-align:right;letter-spacing:-0.1px;white-space:nowrap;">0.0</div>
<div class="t" style="left:522.60px;top:332.69px;width:120px;height:15px;line-height:15px;font-size:11px;color:#2c2c2c;text-align:right;letter-spacing:-0.1px;white-space:nowrap;">0.00</div>
<div class="t" style="left:661.60px;top:332.69px;width:120px;height:15px;line-height:15px;font-size:11px;color:#2c2c2c;text-align:right;letter-spacing:-0.1px;white-space:nowrap;">0</div>
<div class="t" style="left:800.60px;top:332.69px;width:120px;height:15px;line-height:15px;font-size:11px;color:#2c2c2c;text-align:right;letter-spacing:-0.1px;white-space:nowrap;">0</div>
<div class="t" style="left:939.60px;top:332.69px;width:120px;height:15px;line-height:15px;font-size:11px;color:#2c2c2c;text-align:right;letter-spacing:-0.1px;white-space:nowrap;">0</div>
<div class="t" style="left:1080.60px;top:332.69px;width:120px;height:15px;line-height:15px;font-size:11px;color:#2c2c2c;text-align:right;letter-spacing:-0.1px;white-space:nowrap;">0</div>
<div style="left:237px;top:371px;width:968px;height:1px;background:#dedede;"></div>
<div style="left:371px;top:351px;width:1px;height:21px;background:#dedede;"></div>
<div style="left:506px;top:351px;width:1px;height:21px;background:#dedede;"></div>
<div style="left:646px;top:351px;width:1px;height:21px;background:#dedede;"></div>
<div style="left:785px;top:351px;width:1px;height:21px;background:#dedede;"></div>
<div style="left:924px;top:351px;width:1px;height:21px;background:#dedede;"></div>
<div style="left:1063px;top:351px;width:1px;height:21px;background:#dedede;"></div>
<div style="left:1204px;top:351px;width:1px;height:21px;background:#dedede;"></div>
<div class="t" style="left:240.50px;top:353.69px;width:400px;height:15px;line-height:15px;font-size:11px;color:#2c2c2c;text-align:left;letter-spacing:-0.03px;white-space:nowrap;">giugno</div>
<div class="t" style="left:382.60px;top:353.69px;width:120px;height:15px;line-height:15px;font-size:11px;color:#2c2c2c;text-align:right;letter-spacing:-0.1px;white-space:nowrap;">0.0</div>
<div class="t" style="left:522.60px;top:353.69px;width:120px;height:15px;line-height:15px;font-size:11px;color:#2c2c2c;text-align:right;letter-spacing:-0.1px;white-space:nowrap;">0.00</div>
<div class="t" style="left:661.60px;top:353.69px;width:120px;height:15px;line-height:15px;font-size:11px;color:#2c2c2c;text-align:right;letter-spacing:-0.1px;white-space:nowrap;">0</div>
<div class="t" style="left:800.60px;top:353.69px;width:120px;height:15px;line-height:15px;font-size:11px;color:#2c2c2c;text-align:right;letter-spacing:-0.1px;white-space:nowrap;">0</div>
<div class="t" style="left:939.60px;top:353.69px;width:120px;height:15px;line-height:15px;font-size:11px;color:#2c2c2c;text-align:right;letter-spacing:-0.1px;white-space:nowrap;">0</div>
<div class="t" style="left:1080.60px;top:353.69px;width:120px;height:15px;line-height:15px;font-size:11px;color:#2c2c2c;text-align:right;letter-spacing:-0.1px;white-space:nowrap;">0</div>
<div style="left:237px;top:392px;width:968px;height:1px;background:#dedede;"></div>
<div style="left:371px;top:372px;width:1px;height:21px;background:#dedede;"></div>
<div style="left:506px;top:372px;width:1px;height:21px;background:#dedede;"></div>
<div style="left:646px;top:372px;width:1px;height:21px;background:#dedede;"></div>
<div style="left:785px;top:372px;width:1px;height:21px;background:#dedede;"></div>
<div style="left:924px;top:372px;width:1px;height:21px;background:#dedede;"></div>
<div style="left:1063px;top:372px;width:1px;height:21px;background:#dedede;"></div>
<div style="left:1204px;top:372px;width:1px;height:21px;background:#dedede;"></div>
<div class="t" style="left:240.50px;top:374.69px;width:400px;height:15px;line-height:15px;font-size:11px;color:#2c2c2c;text-align:left;letter-spacing:-0.03px;white-space:nowrap;">luglio</div>
<div class="t" style="left:382.60px;top:374.69px;width:120px;height:15px;line-height:15px;font-size:11px;color:#2c2c2c;text-align:right;letter-spacing:-0.1px;white-space:nowrap;">0.0</div>
<div class="t" style="left:522.60px;top:374.69px;width:120px;height:15px;line-height:15px;font-size:11px;color:#2c2c2c;text-align:right;letter-spacing:-0.1px;white-space:nowrap;">0.00</div>
<div class="t" style="left:661.60px;top:374.69px;width:120px;height:15px;line-height:15px;font-size:11px;color:#2c2c2c;text-align:right;letter-spacing:-0.1px;white-space:nowrap;">0</div>
<div class="t" style="left:800.60px;top:374.69px;width:120px;height:15px;line-height:15px;font-size:11px;color:#2c2c2c;text-align:right;letter-spacing:-0.1px;white-space:nowrap;">0</div>
<div class="t" style="left:939.60px;top:374.69px;width:120px;height:15px;line-height:15px;font-size:11px;color:#2c2c2c;text-align:right;letter-spacing:-0.1px;white-space:nowrap;">0</div>
<div class="t" style="left:1080.60px;top:374.69px;width:120px;height:15px;line-height:15px;font-size:11px;color:#2c2c2c;text-align:right;letter-spacing:-0.1px;white-space:nowrap;">0</div>
<div style="left:237px;top:413px;width:968px;height:1px;background:#dedede;"></div>
<div style="left:371px;top:393px;width:1px;height:21px;background:#dedede;"></div>
<div style="left:506px;top:393px;width:1px;height:21px;background:#dedede;"></div>
<div style="left:646px;top:393px;width:1px;height:21px;background:#dedede;"></div>
<div style="left:785px;top:393px;width:1px;height:21px;background:#dedede;"></div>
<div style="left:924px;top:393px;width:1px;height:21px;background:#dedede;"></div>
<div style="left:1063px;top:393px;width:1px;height:21px;background:#dedede;"></div>
<div style="left:1204px;top:393px;width:1px;height:21px;background:#dedede;"></div>
<div class="t" style="left:240.50px;top:395.69px;width:400px;height:15px;line-height:15px;font-size:11px;color:#2c2c2c;text-align:left;letter-spacing:-0.03px;white-space:nowrap;">agosto</div>
<div class="t" style="left:382.60px;top:395.69px;width:120px;height:15px;line-height:15px;font-size:11px;color:#2c2c2c;text-align:right;letter-spacing:-0.1px;white-space:nowrap;">0.0</div>
<div class="t" style="left:522.60px;top:395.69px;width:120px;height:15px;line-height:15px;font-size:11px;color:#2c2c2c;text-align:right;letter-spacing:-0.1px;white-space:nowrap;">0.00</div>
<div class="t" style="left:661.60px;top:395.69px;width:120px;height:15px;line-height:15px;font-size:11px;color:#2c2c2c;text-align:right;letter-spacing:-0.1px;white-space:nowrap;">0</div>
<div class="t" style="left:800.60px;top:395.69px;width:120px;height:15px;line-height:15px;font-size:11px;color:#2c2c2c;text-align:right;letter-spacing:-0.1px;white-space:nowrap;">0</div>
<div class="t" style="left:939.60px;top:395.69px;width:120px;height:15px;line-height:15px;font-size:11px;color:#2c2c2c;text-align:right;letter-spacing:-0.1px;white-space:nowrap;">0</div>
<div class="t" style="left:1080.60px;top:395.69px;width:120px;height:15px;line-height:15px;font-size:11px;color:#2c2c2c;text-align:right;letter-spacing:-0.1px;white-space:nowrap;">0</div>
<div style="left:237px;top:434px;width:968px;height:1px;background:#dedede;"></div>
<div style="left:371px;top:414px;width:1px;height:21px;background:#dedede;"></div>
<div style="left:506px;top:414px;width:1px;height:21px;background:#dedede;"></div>
<div style="left:646px;top:414px;width:1px;height:21px;background:#dedede;"></div>
<div style="left:785px;top:414px;width:1px;height:21px;background:#dedede;"></div>
<div style="left:924px;top:414px;width:1px;height:21px;background:#dedede;"></div>
<div style="left:1063px;top:414px;width:1px;height:21px;background:#dedede;"></div>
<div style="left:1204px;top:414px;width:1px;height:21px;background:#dedede;"></div>
<div class="t" style="left:240.50px;top:416.69px;width:400px;height:15px;line-height:15px;font-size:11px;color:#2c2c2c;text-align:left;letter-spacing:-0.03px;white-space:nowrap;">settembre</div>
<div class="t" style="left:382.60px;top:416.69px;width:120px;height:15px;line-height:15px;font-size:11px;color:#2c2c2c;text-align:right;letter-spacing:-0.1px;white-space:nowrap;">0.0</div>
<div class="t" style="left:522.60px;top:416.69px;width:120px;height:15px;line-height:15px;font-size:11px;color:#2c2c2c;text-align:right;letter-spacing:-0.1px;white-space:nowrap;">0.00</div>
<div class="t" style="left:661.60px;top:416.69px;width:120px;height:15px;line-height:15px;font-size:11px;color:#2c2c2c;text-align:right;letter-spacing:-0.1px;white-space:nowrap;">0</div>
<div class="t" style="left:800.60px;top:416.69px;width:120px;height:15px;line-height:15px;font-size:11px;color:#2c2c2c;text-align:right;letter-spacing:-0.1px;white-space:nowrap;">0</div>
<div class="t" style="left:939.60px;top:416.69px;width:120px;height:15px;line-height:15px;font-size:11px;color:#2c2c2c;text-align:right;letter-spacing:-0.1px;white-space:nowrap;">0</div>
<div class="t" style="left:1080.60px;top:416.69px;width:120px;height:15px;line-height:15px;font-size:11px;color:#2c2c2c;text-align:right;letter-spacing:-0.1px;white-space:nowrap;">0</div>
<div style="left:371px;top:435px;width:1px;height:4px;background:#dedede;"></div>
<div style="left:506px;top:435px;width:1px;height:4px;background:#dedede;"></div>
<div style="left:646px;top:435px;width:1px;height:4px;background:#dedede;"></div>
<div style="left:785px;top:435px;width:1px;height:4px;background:#dedede;"></div>
<div style="left:924px;top:435px;width:1px;height:4px;background:#dedede;"></div>
<div style="left:1063px;top:435px;width:1px;height:4px;background:#dedede;"></div>
<div style="left:1205px;top:246px;width:17px;height:193px;background:#f0f0f0;"></div>
<div style="left:1206px;top:247px;width:15px;height:16px;background:#fff;border:1px solid #ababab;"></div>
<svg style="left:1210px;top:252px" width="8" height="5"><path d="M0.2 4.2 L3.6 0.2 L7 4.2 Z" fill="#858585"/></svg>
<div style="left:1206px;top:263px;width:15px;height:110px;background:#fff;border:1px solid #ababab;"></div>
<div style="left:1206px;top:422px;width:15px;height:16px;background:#fff;border:1px solid #ababab;"></div>
<svg style="left:1210px;top:428px" width="8" height="5"><path d="M0.2 1 L3.6 4.8 L7 1 Z" fill="#858585"/></svg>
<div style="left:504px;top:219px;width:142px;height:29px;border:3px solid #ed1c24;"></div>
<div style="left:213px;top:446px;width:1010px;height:267px;background:#fff;border:1px solid #a0a0a0;border-bottom:none;"></div>
<div style="left:214px;top:447px;width:1008px;height:27px;background:#f0f0f0;"></div>
<div class="t" style="left:662.80px;top:451.06px;width:400px;height:20px;line-height:20px;font-size:16px;color:#333;text-align:left;letter-spacing:-0.288px;white-space:nowrap;">Raffrescamento</div>
<div style="left:214px;top:496px;width:1008px;height:1px;background:#a8a8a8;"></div>
<div style="left:214px;top:519px;width:1008px;height:1px;background:#a8a8a8;"></div>
<div style="left:236px;top:474px;width:1px;height:45px;background:#a8a8a8;"></div>
<div style="left:236px;top:520px;width:1px;height:193px;background:#dedede;"></div>
<div style="left:647px;top:474px;width:1px;height:22px;background:#a8a8a8;"></div>
<div style="left:1204px;top:474px;width:1px;height:45px;background:#a8a8a8;"></div>
<div style="left:371px;top:496px;width:1px;height:23px;background:#a8a8a8;"></div>
<div style="left:506px;top:496px;width:1px;height:23px;background:#a8a8a8;"></div>
<div style="left:647px;top:496px;width:1px;height:23px;background:#a8a8a8;"></div>
<div style="left:784px;top:496px;width:1px;height:23px;background:#a8a8a8;"></div>
<div style="left:921px;top:496px;width:1px;height:23px;background:#a8a8a8;"></div>
<div style="left:1058px;top:496px;width:1px;height:23px;background:#a8a8a8;"></div>
<div class="t" style="left:776.03px;top:478.19px;width:300px;height:15px;line-height:15px;font-size:11px;color:#6a6a6a;text-align:center;letter-spacing:-0.07px;white-space:nowrap;">Ore accensione per potenza %</div>
<div class="t" style="left:204.03px;top:500.69px;width:200px;height:15px;line-height:15px;font-size:11px;color:#6a6a6a;text-align:center;letter-spacing:-0.05px;white-space:nowrap;">Mese</div>
<div class="t" style="left:339.02px;top:500.69px;width:200px;height:15px;line-height:15px;font-size:11px;color:#6a6a6a;text-align:center;letter-spacing:-0.05px;white-space:nowrap;">ΦC;max[W]</div>
<div class="t" style="left:477.02px;top:500.69px;width:200px;height:15px;line-height:15px;font-size:11px;color:#6a6a6a;text-align:center;letter-spacing:-0.05px;white-space:nowrap;">QC;nd [kWh]</div>
<div class="t" style="left:615.92px;top:500.69px;width:200px;height:15px;line-height:15px;font-size:11px;color:#6a6a6a;text-align:center;letter-spacing:0.15px;white-space:nowrap;">&lt; 25%</div>
<div class="t" style="left:752.92px;top:500.69px;width:200px;height:15px;line-height:15px;font-size:11px;color:#6a6a6a;text-align:center;letter-spacing:0.15px;white-space:nowrap;">25% - 50%</div>
<div class="t" style="left:889.92px;top:500.69px;width:200px;height:15px;line-height:15px;font-size:11px;color:#6a6a6a;text-align:center;letter-spacing:0.15px;white-space:nowrap;">50% - 75%</div>
<div class="t" style="left:1031.42px;top:500.69px;width:200px;height:15px;line-height:15px;font-size:11px;color:#6a6a6a;text-align:center;letter-spacing:0.15px;white-space:nowrap;">&gt; 75%</div>
<div style="left:372px;top:520px;width:832px;height:21px;background:#e6e6e6;"></div>
<svg style="left:223px;top:526px" width="5" height="9"><path d="M0 0.3 L4 4.2 L0 8.1 Z" fill="#858585"/></svg>
<div style="left:237px;top:540px;width:968px;height:1px;background:#dedede;"></div>
<div style="left:371px;top:520px;width:1px;height:21px;background:#d6d6d6;"></div>
<div style="left:506px;top:520px;width:1px;height:21px;background:#d6d6d6;"></div>
<div style="left:647px;top:520px;width:1px;height:21px;background:#d6d6d6;"></div>
<div style="left:784px;top:520px;width:1px;height:21px;background:#d6d6d6;"></div>
<div style="left:921px;top:520px;width:1px;height:21px;background:#d6d6d6;"></div>
<div style="left:1058px;top:520px;width:1px;height:21px;background:#d6d6d6;"></div>
<div style="left:1204px;top:520px;width:1px;height:21px;background:#d6d6d6;"></div>
<div class="t" style="left:240.50px;top:522.69px;width:400px;height:15px;line-height:15px;font-size:11px;color:#2c2c2c;text-align:left;letter-spacing:-0.03px;white-space:nowrap;">gennaio</div>
<div class="t" style="left:382.60px;top:522.69px;width:120px;height:15px;line-height:15px;font-size:11px;color:#2c2c2c;text-align:right;letter-spacing:-0.1px;white-space:nowrap;">0.0</div>
<div class="t" style="left:523.60px;top:522.69px;width:120px;height:15px;line-height:15px;font-size:11px;color:#2c2c2c;text-align:right;letter-spacing:-0.1px;white-space:nowrap;">0.00</div>
<div class="t" style="left:660.60px;top:522.69px;width:120px;height:15px;line-height:15px;font-size:11px;color:#2c2c2c;text-align:right;letter-spacing:-0.1px;white-space:nowrap;">0</div>
<div class="t" style="left:797.60px;top:522.69px;width:120px;height:15px;line-height:15px;font-size:11px;color:#2c2c2c;text-align:right;letter-spacing:-0.1px;white-space:nowrap;">0</div>
<div class="t" style="left:934.60px;top:522.69px;width:120px;height:15px;line-height:15px;font-size:11px;color:#2c2c2c;text-align:right;letter-spacing:-0.1px;white-space:nowrap;">0</div>
<div class="t" style="left:1080.60px;top:522.69px;width:120px;height:15px;line-height:15px;font-size:11px;color:#2c2c2c;text-align:right;letter-spacing:-0.1px;white-space:nowrap;">0</div>
<div style="left:237px;top:561px;width:968px;height:1px;background:#dedede;"></div>
<div style="left:371px;top:541px;width:1px;height:21px;background:#dedede;"></div>
<div style="left:506px;top:541px;width:1px;height:21px;background:#dedede;"></div>
<div style="left:647px;top:541px;width:1px;height:21px;background:#dedede;"></div>
<div style="left:784px;top:541px;width:1px;height:21px;background:#dedede;"></div>
<div style="left:921px;top:541px;width:1px;height:21px;background:#dedede;"></div>
<div style="left:1058px;top:541px;width:1px;height:21px;background:#dedede;"></div>
<div style="left:1204px;top:541px;width:1px;height:21px;background:#dedede;"></div>
<div class="t" style="left:240.50px;top:543.69px;width:400px;height:15px;line-height:15px;font-size:11px;color:#2c2c2c;text-align:left;letter-spacing:-0.03px;white-space:nowrap;">febbraio</div>
<div class="t" style="left:382.60px;top:543.69px;width:120px;height:15px;line-height:15px;font-size:11px;color:#2c2c2c;text-align:right;letter-spacing:-0.1px;white-space:nowrap;">0.0</div>
<div class="t" style="left:523.60px;top:543.69px;width:120px;height:15px;line-height:15px;font-size:11px;color:#2c2c2c;text-align:right;letter-spacing:-0.1px;white-space:nowrap;">0.00</div>
<div class="t" style="left:660.60px;top:543.69px;width:120px;height:15px;line-height:15px;font-size:11px;color:#2c2c2c;text-align:right;letter-spacing:-0.1px;white-space:nowrap;">0</div>
<div class="t" style="left:797.60px;top:543.69px;width:120px;height:15px;line-height:15px;font-size:11px;color:#2c2c2c;text-align:right;letter-spacing:-0.1px;white-space:nowrap;">0</div>
<div class="t" style="left:934.60px;top:543.69px;width:120px;height:15px;line-height:15px;font-size:11px;color:#2c2c2c;text-align:right;letter-spacing:-0.1px;white-space:nowrap;">0</div>
<div class="t" style="left:1080.60px;top:543.69px;width:120px;height:15px;line-height:15px;font-size:11px;color:#2c2c2c;text-align:right;letter-spacing:-0.1px;white-space:nowrap;">0</div>
<div style="left:237px;top:582px;width:968px;height:1px;background:#dedede;"></div>
<div style="left:371px;top:562px;width:1px;height:21px;background:#dedede;"></div>
<div style="left:506px;top:562px;width:1px;height:21px;background:#dedede;"></div>
<div style="left:647px;top:562px;width:1px;height:21px;background:#dedede;"></div>
<div style="left:784px;top:562px;width:1px;height:21px;background:#dedede;"></div>
<div style="left:921px;top:562px;width:1px;height:21px;background:#dedede;"></div>
<div style="left:1058px;top:562px;width:1px;height:21px;background:#dedede;"></div>
<div style="left:1204px;top:562px;width:1px;height:21px;background:#dedede;"></div>
<div class="t" style="left:240.50px;top:564.69px;width:400px;height:15px;line-height:15px;font-size:11px;color:#2c2c2c;text-align:left;letter-spacing:-0.03px;white-space:nowrap;">marzo</div>
<div class="t" style="left:382.60px;top:564.69px;width:120px;height:15px;line-height:15px;font-size:11px;color:#2c2c2c;text-align:right;letter-spacing:-0.1px;white-space:nowrap;">0.0</div>
<div class="t" style="left:523.60px;top:564.69px;width:120px;height:15px;line-height:15px;font-size:11px;color:#2c2c2c;text-align:right;letter-spacing:-0.1px;white-space:nowrap;">0.00</div>
<div class="t" style="left:660.60px;top:564.69px;width:120px;height:15px;line-height:15px;font-size:11px;color:#2c2c2c;text-align:right;letter-spacing:-0.1px;white-space:nowrap;">0</div>
<div class="t" style="left:797.60px;top:564.69px;width:120px;height:15px;line-height:15px;font-size:11px;color:#2c2c2c;text-align:right;letter-spacing:-0.1px;white-space:nowrap;">0</div>
<div class="t" style="left:934.60px;top:564.69px;width:120px;height:15px;line-height:15px;font-size:11px;color:#2c2c2c;text-align:right;letter-spacing:-0.1px;white-space:nowrap;">0</div>
<div class="t" style="left:1080.60px;top:564.69px;width:120px;height:15px;line-height:15px;font-size:11px;color:#2c2c2c;text-align:right;letter-spacing:-0.1px;white-space:nowrap;">0</div>
<div style="left:237px;top:603px;width:968px;height:1px;background:#dedede;"></div>
<div style="left:371px;top:583px;width:1px;height:21px;background:#dedede;"></div>
<div style="left:506px;top:583px;width:1px;height:21px;background:#dedede;"></div>
<div style="left:647px;top:583px;width:1px;height:21px;background:#dedede;"></div>
<div style="left:784px;top:583px;width:1px;height:21px;background:#dedede;"></div>
<div style="left:921px;top:583px;width:1px;height:21px;background:#dedede;"></div>
<div style="left:1058px;top:583px;width:1px;height:21px;background:#dedede;"></div>
<div style="left:1204px;top:583px;width:1px;height:21px;background:#dedede;"></div>
<div class="t" style="left:240.50px;top:585.69px;width:400px;height:15px;line-height:15px;font-size:11px;color:#2c2c2c;text-align:left;letter-spacing:-0.03px;white-space:nowrap;">aprile</div>
<div class="t" style="left:382.60px;top:585.69px;width:120px;height:15px;line-height:15px;font-size:11px;color:#2c2c2c;text-align:right;letter-spacing:-0.1px;white-space:nowrap;">0.0</div>
<div class="t" style="left:523.60px;top:585.69px;width:120px;height:15px;line-height:15px;font-size:11px;color:#2c2c2c;text-align:right;letter-spacing:-0.1px;white-space:nowrap;">0.00</div>
<div class="t" style="left:660.60px;top:585.69px;width:120px;height:15px;line-height:15px;font-size:11px;color:#2c2c2c;text-align:right;letter-spacing:-0.1px;white-space:nowrap;">0</div>
<div class="t" style="left:797.60px;top:585.69px;width:120px;height:15px;line-height:15px;font-size:11px;color:#2c2c2c;text-align:right;letter-spacing:-0.1px;white-space:nowrap;">0</div>
<div class="t" style="left:934.60px;top:585.69px;width:120px;height:15px;line-height:15px;font-size:11px;color:#2c2c2c;text-align:right;letter-spacing:-0.1px;white-space:nowrap;">0</div>
<div class="t" style="left:1080.60px;top:585.69px;width:120px;height:15px;line-height:15px;font-size:11px;color:#2c2c2c;text-align:right;letter-spacing:-0.1px;white-space:nowrap;">0</div>
<div style="left:237px;top:624px;width:968px;height:1px;background:#dedede;"></div>
<div style="left:371px;top:604px;width:1px;height:21px;background:#dedede;"></div>
<div style="left:506px;top:604px;width:1px;height:21px;background:#dedede;"></div>
<div style="left:647px;top:604px;width:1px;height:21px;background:#dedede;"></div>
<div style="left:784px;top:604px;width:1px;height:21px;background:#dedede;"></div>
<div style="left:921px;top:604px;width:1px;height:21px;background:#dedede;"></div>
<div style="left:1058px;top:604px;width:1px;height:21px;background:#dedede;"></div>
<div style="left:1204px;top:604px;width:1px;height:21px;background:#dedede;"></div>
<div class="t" style="left:240.50px;top:606.69px;width:400px;height:15px;line-height:15px;font-size:11px;color:#2c2c2c;text-align:left;letter-spacing:-0.03px;white-space:nowrap;">maggio</div>
<div class="t" style="left:382.60px;top:606.69px;width:120px;height:15px;line-height:15px;font-size:11px;color:#2c2c2c;text-align:right;letter-spacing:-0.1px;white-space:nowrap;">6953.1</div>
<div class="t" style="left:523.60px;top:606.69px;width:120px;height:15px;line-height:15px;font-size:11px;color:#2c2c2c;text-align:right;letter-spacing:-0.1px;white-space:nowrap;">19.66</div>
<div class="t" style="left:660.60px;top:606.69px;width:120px;height:15px;line-height:15px;font-size:11px;color:#2c2c2c;text-align:right;letter-spacing:-0.1px;white-space:nowrap;">4</div>
<div class="t" style="left:797.60px;top:606.69px;width:120px;height:15px;line-height:15px;font-size:11px;color:#2c2c2c;text-align:right;letter-spacing:-0.1px;white-space:nowrap;">0</div>
<div class="t" style="left:934.60px;top:606.69px;width:120px;height:15px;line-height:15px;font-size:11px;color:#2c2c2c;text-align:right;letter-spacing:-0.1px;white-space:nowrap;">0</div>
<div class="t" style="left:1080.60px;top:606.69px;width:120px;height:15px;line-height:15px;font-size:11px;color:#2c2c2c;text-align:right;letter-spacing:-0.1px;white-space:nowrap;">0</div>
<div style="left:237px;top:645px;width:968px;height:1px;background:#dedede;"></div>
<div style="left:371px;top:625px;width:1px;height:21px;background:#dedede;"></div>
<div style="left:506px;top:625px;width:1px;height:21px;background:#dedede;"></div>
<div style="left:647px;top:625px;width:1px;height:21px;background:#dedede;"></div>
<div style="left:784px;top:625px;width:1px;height:21px;background:#dedede;"></div>
<div style="left:921px;top:625px;width:1px;height:21px;background:#dedede;"></div>
<div style="left:1058px;top:625px;width:1px;height:21px;background:#dedede;"></div>
<div style="left:1204px;top:625px;width:1px;height:21px;background:#dedede;"></div>
<div class="t" style="left:240.50px;top:627.69px;width:400px;height:15px;line-height:15px;font-size:11px;color:#2c2c2c;text-align:left;letter-spacing:-0.03px;white-space:nowrap;">giugno</div>
<div class="t" style="left:382.60px;top:627.69px;width:120px;height:15px;line-height:15px;font-size:11px;color:#2c2c2c;text-align:right;letter-spacing:-0.1px;white-space:nowrap;">19446.5</div>
<div class="t" style="left:523.60px;top:627.69px;width:120px;height:15px;line-height:15px;font-size:11px;color:#2c2c2c;text-align:right;letter-spacing:-0.1px;white-space:nowrap;">1000.39</div>
<div class="t" style="left:660.60px;top:627.69px;width:120px;height:15px;line-height:15px;font-size:11px;color:#2c2c2c;text-align:right;letter-spacing:-0.1px;white-space:nowrap;">94</div>
<div class="t" style="left:797.60px;top:627.69px;width:120px;height:15px;line-height:15px;font-size:11px;color:#2c2c2c;text-align:right;letter-spacing:-0.1px;white-space:nowrap;">19</div>
<div class="t" style="left:934.60px;top:627.69px;width:120px;height:15px;line-height:15px;font-size:11px;color:#2c2c2c;text-align:right;letter-spacing:-0.1px;white-space:nowrap;">0</div>
<div class="t" style="left:1080.60px;top:627.69px;width:120px;height:15px;line-height:15px;font-size:11px;color:#2c2c2c;text-align:right;letter-spacing:-0.1px;white-space:nowrap;">0</div>
<div style="left:237px;top:666px;width:968px;height:1px;background:#dedede;"></div>
<div style="left:371px;top:646px;width:1px;height:21px;background:#dedede;"></div>
<div style="left:506px;top:646px;width:1px;height:21px;background:#dedede;"></div>
<div style="left:647px;top:646px;width:1px;height:21px;background:#dedede;"></div>
<div style="left:784px;top:646px;width:1px;height:21px;background:#dedede;"></div>
<div style="left:921px;top:646px;width:1px;height:21px;background:#dedede;"></div>
<div style="left:1058px;top:646px;width:1px;height:21px;background:#dedede;"></div>
<div style="left:1204px;top:646px;width:1px;height:21px;background:#dedede;"></div>
<div class="t" style="left:240.50px;top:648.69px;width:400px;height:15px;line-height:15px;font-size:11px;color:#2c2c2c;text-align:left;letter-spacing:-0.03px;white-space:nowrap;">luglio</div>
<div class="t" style="left:382.60px;top:648.69px;width:120px;height:15px;line-height:15px;font-size:11px;color:#2c2c2c;text-align:right;letter-spacing:-0.1px;white-space:nowrap;">33733.9</div>
<div class="t" style="left:523.60px;top:648.69px;width:120px;height:15px;line-height:15px;font-size:11px;color:#2c2c2c;text-align:right;letter-spacing:-0.1px;white-space:nowrap;">5033.60</div>
<div class="t" style="left:660.60px;top:648.69px;width:120px;height:15px;line-height:15px;font-size:11px;color:#2c2c2c;text-align:right;letter-spacing:-0.1px;white-space:nowrap;">112</div>
<div class="t" style="left:797.60px;top:648.69px;width:120px;height:15px;line-height:15px;font-size:11px;color:#2c2c2c;text-align:right;letter-spacing:-0.1px;white-space:nowrap;">157</div>
<div class="t" style="left:934.60px;top:648.69px;width:120px;height:15px;line-height:15px;font-size:11px;color:#2c2c2c;text-align:right;letter-spacing:-0.1px;white-space:nowrap;">29</div>
<div class="t" style="left:1080.60px;top:648.69px;width:120px;height:15px;line-height:15px;font-size:11px;color:#2c2c2c;text-align:right;letter-spacing:-0.1px;white-space:nowrap;">0</div>
<div style="left:237px;top:687px;width:968px;height:1px;background:#dedede;"></div>
<div style="left:371px;top:667px;width:1px;height:21px;background:#dedede;"></div>
<div style="left:506px;top:667px;width:1px;height:21px;background:#dedede;"></div>
<div style="left:647px;top:667px;width:1px;height:21px;background:#dedede;"></div>
<div style="left:784px;top:667px;width:1px;height:21px;background:#dedede;"></div>
<div style="left:921px;top:667px;width:1px;height:21px;background:#dedede;"></div>
<div style="left:1058px;top:667px;width:1px;height:21px;background:#dedede;"></div>
<div style="left:1204px;top:667px;width:1px;height:21px;background:#dedede;"></div>
<div class="t" style="left:240.50px;top:669.69px;width:400px;height:15px;line-height:15px;font-size:11px;color:#2c2c2c;text-align:left;letter-spacing:-0.03px;white-space:nowrap;">agosto</div>
<div class="t" style="left:382.60px;top:669.69px;width:120px;height:15px;line-height:15px;font-size:11px;color:#2c2c2c;text-align:right;letter-spacing:-0.1px;white-space:nowrap;">36654.5</div>
<div class="t" style="left:523.60px;top:669.69px;width:120px;height:15px;line-height:15px;font-size:11px;color:#2c2c2c;text-align:right;letter-spacing:-0.1px;white-space:nowrap;">4829.82</div>
<div class="t" style="left:660.60px;top:669.69px;width:120px;height:15px;line-height:15px;font-size:11px;color:#2c2c2c;text-align:right;letter-spacing:-0.1px;white-space:nowrap;">87</div>
<div class="t" style="left:797.60px;top:669.69px;width:120px;height:15px;line-height:15px;font-size:11px;color:#2c2c2c;text-align:right;letter-spacing:-0.1px;white-space:nowrap;">119</div>
<div class="t" style="left:934.60px;top:669.69px;width:120px;height:15px;line-height:15px;font-size:11px;color:#2c2c2c;text-align:right;letter-spacing:-0.1px;white-space:nowrap;">51</div>
<div class="t" style="left:1080.60px;top:669.69px;width:120px;height:15px;line-height:15px;font-size:11px;color:#2c2c2c;text-align:right;letter-spacing:-0.1px;white-space:nowrap;">0</div>
<div style="left:237px;top:708px;width:968px;height:1px;background:#dedede;"></div>
<div style="left:371px;top:688px;width:1px;height:21px;background:#dedede;"></div>
<div style="left:506px;top:688px;width:1px;height:21px;background:#dedede;"></div>
<div style="left:647px;top:688px;width:1px;height:21px;background:#dedede;"></div>
<div style="left:784px;top:688px;width:1px;height:21px;background:#dedede;"></div>
<div style="left:921px;top:688px;width:1px;height:21px;background:#dedede;"></div>
<div style="left:1058px;top:688px;width:1px;height:21px;background:#dedede;"></div>
<div style="left:1204px;top:688px;width:1px;height:21px;background:#dedede;"></div>
<div class="t" style="left:240.50px;top:690.69px;width:400px;height:15px;line-height:15px;font-size:11px;color:#2c2c2c;text-align:left;letter-spacing:-0.03px;white-space:nowrap;">settembre</div>
<div class="t" style="left:382.60px;top:690.69px;width:120px;height:15px;line-height:15px;font-size:11px;color:#2c2c2c;text-align:right;letter-spacing:-0.1px;white-space:nowrap;">28655.5</div>
<div class="t" style="left:523.60px;top:690.69px;width:120px;height:15px;line-height:15px;font-size:11px;color:#2c2c2c;text-align:right;letter-spacing:-0.1px;white-space:nowrap;">1965.05</div>
<div class="t" style="left:660.60px;top:690.69px;width:120px;height:15px;line-height:15px;font-size:11px;color:#2c2c2c;text-align:right;letter-spacing:-0.1px;white-space:nowrap;">55</div>
<div class="t" style="left:797.60px;top:690.69px;width:120px;height:15px;line-height:15px;font-size:11px;color:#2c2c2c;text-align:right;letter-spacing:-0.1px;white-space:nowrap;">76</div>
<div class="t" style="left:934.60px;top:690.69px;width:120px;height:15px;line-height:15px;font-size:11px;color:#2c2c2c;text-align:right;letter-spacing:-0.1px;white-space:nowrap;">1</div>
<div class="t" style="left:1080.60px;top:690.69px;width:120px;height:15px;line-height:15px;font-size:11px;color:#2c2c2c;text-align:right;letter-spacing:-0.1px;white-space:nowrap;">0</div>
<div style="left:371px;top:709px;width:1px;height:4px;background:#dedede;"></div>
<div style="left:506px;top:709px;width:1px;height:4px;background:#dedede;"></div>
<div style="left:647px;top:709px;width:1px;height:4px;background:#dedede;"></div>
<div style="left:784px;top:709px;width:1px;height:4px;background:#dedede;"></div>
<div style="left:921px;top:709px;width:1px;height:4px;background:#dedede;"></div>
<div style="left:1058px;top:709px;width:1px;height:4px;background:#dedede;"></div>
<div style="left:1205px;top:520px;width:17px;height:193px;background:#f0f0f0;"></div>
<div style="left:1206px;top:521px;width:15px;height:16px;background:#fff;border:1px solid #ababab;"></div>
<svg style="left:1210px;top:526px" width="8" height="5"><path d="M0.2 4.2 L3.6 0.2 L7 4.2 Z" fill="#858585"/></svg>
<div style="left:1206px;top:537px;width:15px;height:110px;background:#fff;border:1px solid #ababab;"></div>
<div style="left:1206px;top:696px;width:15px;height:16px;background:#fff;border:1px solid #ababab;"></div>
<svg style="left:1210px;top:702px" width="8" height="5"><path d="M0.2 1 L3.6 4.8 L7 1 Z" fill="#858585"/></svg>
<div style="left:508px;top:496px;width:142px;height:23px;border:3px solid #00a2e8;"></div>
<div style="left:0px;top:713px;width:1224px;height:80px;background:#fff;"></div>
</body></html>
